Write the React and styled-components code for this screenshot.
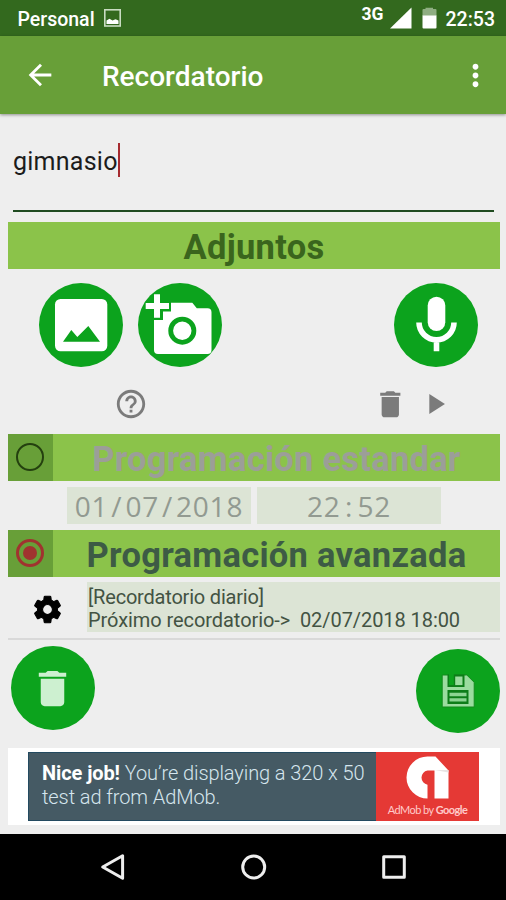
import React from 'react';
import styled, { createGlobalStyle } from 'styled-components';
import {
  MdArrowBack,
  MdDelete,
  MdHelpOutline,
  MdMoreVert,
  MdPlayArrow,
  MdSettings,
} from 'react-icons/md';

export default function App() {
  return (
    <>
      <GlobalStyle />
      <Screen>
        <StatusBar />
        <AppBar>
          <MdArrowBack size={34} />
          <Title>Recordatorio</Title>
          <MdMoreVert size={35} />
        </AppBar>
        <Content>
          <NameField>
            <span>gimnasio</span>
            <Caret />
          </NameField>
          <Attachments />
          <SectionBar>
            <RadioCell>
              <Radio />
            </RadioCell>
            <SectionTitle $color="#9c9e98" $spacing={0.25}>
              Programación estandar
            </SectionTitle>
          </SectionBar>
          <DateRow>
            <DateValue value="01/07/2018" />
            <DateValue value="22:52" />
          </DateRow>
          <SectionBar>
            <RadioCell>
              <Radio $checked />
            </RadioCell>
            <SectionTitle $color="#3d5b45" $spacing={0.28}>
              Programación avanzada
            </SectionTitle>
          </SectionBar>
          <AdvancedRow>
            <GearIcon size={33} />
            <Summary>
              <SummaryLine $spacing={-0.2}>[Recordatorio diario]</SummaryLine>
              <SummaryLine $spacing={-0.07}>
                Próximo recordatorio-&gt;&nbsp; 02/07/2018 18:00
              </SummaryLine>
            </Summary>
          </AdvancedRow>
          <Actions>
            <RoundButton aria-label="Eliminar" $color="#cdf0d0">
              <DeleteIcon size={47} />
            </RoundButton>
            <RoundButton aria-label="Guardar" $drop={3}>
              <SaveIcon />
            </RoundButton>
          </Actions>
          <AdBanner />
        </Content>
        <NavBar />
      </Screen>
    </>
  );
}

function StatusBar() {
  return (
    <Status>
      <StatusText>Personal</StatusText>
      <PictureIcon width="17" height="18" viewBox="0 0 17 18">
        <rect x="0.8" y="0.8" width="15.4" height="16.2" fill="none" stroke="#c9dcc2" strokeWidth="1.6" />
        <path d="M2.5 15v-3.6l3-1.6 3 1.8 3-1.4 3 1.4V15z" fill="#fff" />
      </PictureIcon>
      <Network>3G</Network>
      <svg width="22" height="22" viewBox="0 0 22 22">
        <path d="M21.5 0.5v21H0z" fill="#fff" />
      </svg>
      <Battery width="15" height="22" viewBox="0 0 15 22">
        <path d="M0.5 9V3q0-1 1-1H3.5V0.8h7.5V2h2.5q1 0 1 1v6z" fill="#8fae82" />
        <path d="M0.5 8.5h14V20.5q0 1-1 1h-12q-1 0-1-1z" fill="#fff" />
      </Battery>
      <StatusText>22:53</StatusText>
    </Status>
  );
}

function Attachments() {
  return (
    <>
      <SectionBar>
        <SectionTitle $color="#3a651d" $spacing={0.3}>
          Adjuntos
        </SectionTitle>
      </SectionBar>
      <AttachButtons>
        <RoundButton aria-label="Imagen">
          <PhotoIcon />
        </RoundButton>
        <RoundButton aria-label="Cámara">
          <CameraIcon />
        </RoundButton>
        <Spacer />
        <RoundButton aria-label="Grabar">
          <MicIcon />
        </RoundButton>
      </AttachButtons>
      <AttachTools>
        <MdHelpOutline size={34} />
        <Spacer />
        <MdDelete size={34.6} />
        <MdPlayArrow size={34} />
      </AttachTools>
    </>
  );
}

// Digits are evenly tracked, separators take a full digit cell.
function DateValue({ value }) {
  return (
    <DateBox>
      {value
        .split(/(\D)/)
        .map((part, i) => (i % 2 ? <Separator key={i}>{part}</Separator> : part))}
    </DateBox>
  );
}

function AdBanner() {
  return (
    <AdFrame>
      <AdText>
        <div>
          <strong>Nice job!</strong> You’re displaying a 320 x 50
        </div>
        <div>test ad from AdMob.</div>
      </AdText>
      <AdBrand>
        <svg width="43" height="43" viewBox="0 0 43 43">
          <path
            d="M21.5 42.5A21 21 0 0 1 21.5 0.5H29.5L42.5 14.5V42.5H28.5V14.5H21.5A7.2 7.2 0 0 0 21.5 28.7z"
            fill="#fff"
          />
          <path d="M28.5 14h14v2.6z" fill="#e8e4e4" />
        </svg>
        <AdCaption>
          AdMob by <b>Google</b>
        </AdCaption>
      </AdBrand>
    </AdFrame>
  );
}

function NavBar() {
  return (
    <Nav>
      <svg width="28" height="30" viewBox="0 0 28 30">
        <path d="M3.7 15L23.6 3.8V26.2z" />
      </svg>
      <svg width="28" height="30" viewBox="0 0 28 30">
        <circle cx="13.7" cy="15" r="11" />
      </svg>
      <svg width="28" height="30" viewBox="0 0 28 30">
        <rect x="3.7" y="4.7" width="20.6" height="20.6" />
      </svg>
    </Nav>
  );
}

function PhotoIcon() {
  return (
    <svg width="84" height="84" viewBox="0 0 84 84">
      <rect x="16" y="16" width="52.3" height="52.3" rx="5.5" fill="#fff" />
      <path d="M24 58.7L32.3 47L38.3 54L49.3 43L61 58.7z" fill="#0ca31d" />
    </svg>
  );
}

function CameraIcon() {
  return (
    <svg width="84" height="84" viewBox="0 0 84 84">
      <path d="M16 11.3h6V20h9v6h-9v8.7h-6V26H7.7v-6H16z" fill="#fff" />
      <path
        d="M33 19.7H54.3L58.8 25.3H69.5q4 0 4 4V67q0 4-4 4H20q-4 0-4-4V37H25V28.5H33z"
        fill="#fff"
      />
      <circle cx="44.3" cy="47.7" r="11.6" fill="none" stroke="#0ca31d" strokeWidth="4.8" />
    </svg>
  );
}

function MicIcon() {
  return (
    <svg width="84" height="84" viewBox="0 0 84 84">
      <rect x="33.7" y="13.7" width="17.6" height="34.3" rx="8.8" fill="#fff" />
      <path
        d="M25 39.5a17.5 17.2 0 0 0 35 0M42.5 57v11.3"
        fill="none"
        stroke="#fff"
        strokeWidth="5.6"
      />
    </svg>
  );
}

function SaveIcon() {
  return (
    <svg width="84" height="84" viewBox="0 0 84 84">
      <path d="M26.2 26H50.8L58.2 33.3V58H26.2z" fill="#9bdc9f" stroke="#128a1d" />
      <path d="M31.5 25.5h17v12.5h-17z" fill="#0d7d18" />
      <path d="M33 25h4.8v11H33z" fill="#0ca31d" />
      <path d="M39.2 27.5h7.3v8.6h-7.3z" fill="#9bdc9f" />
      <path d="M31.5 41h21v14h-21z" fill="#0d7d18" />
      <path d="M33.5 43.8h17v3.4h-17zM33.5 49.2h17v3.4h-17z" fill="#8cd492" />
    </svg>
  );
}

const GlobalStyle = createGlobalStyle`
  * {
    box-sizing: border-box;
  }

  body {
    margin: 0;
    background: #eee;
    font-family: Roboto, 'Liberation Sans', sans-serif;
  }

  svg {
    display: block;
    flex: none;
  }
`;

const Screen = styled.div`
  display: flex;
  flex-direction: column;
  width: 506px;
  height: 900px;
  overflow: hidden;
  background: #eee;
  white-space: nowrap;
`;

const Status = styled.div`
  display: flex;
  align-items: center;
  flex: none;
  height: 36px;
  padding: 0 11px 0 17.5px;
  background: #33691e;
  color: #fff;
`;

const StatusText = styled.span`
  padding-top: 2px;
  font-size: 19.5px;
  font-weight: 500;
`;

const PictureIcon = styled.svg`
  margin: 0 auto 0 9px;
`;

const Network = styled.span`
  margin-right: 6px;
  padding-bottom: 9px;
  font-size: 17.5px;
  font-weight: 700;
`;

const Battery = styled.svg`
  margin: 0 9px 0 10px;
`;

const AppBar = styled.header`
  display: flex;
  align-items: center;
  flex: none;
  height: 78px;
  padding: 0 13px 0 23px;
  background: #689f38;
  color: #fff;
  box-shadow: 0 1px 3px rgba(0, 0, 0, 0.4);
`;

const Title = styled.h1`
  flex: 1;
  margin: 0;
  padding: 3px 0 0 45px;
  font-size: 28px;
  font-weight: 500;
`;

const Content = styled.main`
  display: flex;
  flex-direction: column;
  flex: none;
  height: 719.5px;
  padding: 0 6px 0 8px;
`;

const NameField = styled.div`
  display: flex;
  align-items: flex-start;
  height: 98px;
  margin: 0 6px 10px 5px;
  padding-top: 29px;
  border-bottom: 2px solid #1f4a20;
  color: #1c1c1c;
  font-size: 25px;
  letter-spacing: 0.25px;
  line-height: 37px;
`;

const Caret = styled.span`
  width: 2px;
  height: 34px;
  background: #a52a2f;
`;

const SectionBar = styled.div`
  display: flex;
  flex: none;
  height: 47px;
  background: #8bc34a;
`;

const SectionTitle = styled.h2`
  flex: 1;
  margin: 0;
  padding: 2px 0 0;
  color: ${({ $color }) => $color};
  font-size: 34.5px;
  font-weight: 700;
  letter-spacing: ${({ $spacing }) => $spacing}px;
  line-height: 47px;
  text-align: center;
`;

const RadioCell = styled.div`
  display: flex;
  align-items: center;
  width: 45px;
  padding: 0 0 1px 8px;
  background: #689f38;
`;

const Radio = styled.span`
  display: flex;
  align-items: center;
  justify-content: center;
  width: 28px;
  height: 28px;
  border: solid ${({ $checked }) => ($checked ? '#a0332f' : '#24400f')};
  border-width: ${({ $checked }) => ($checked ? 3 : 2)}px;
  border-radius: 50%;

  &::after {
    content: '';
    width: 14px;
    height: 14px;
    border-radius: 50%;
    background: ${({ $checked }) => ($checked ? '#a0332f' : 'transparent')};
  }
`;

const AttachButtons = styled.div`
  display: flex;
  gap: 15px;
  padding: 14px 22px 0 31px;
`;

const RoundButton = styled.button`
  display: flex;
  align-items: center;
  justify-content: center;
  flex: none;
  width: 84px;
  height: 84px;
  margin: ${({ $drop = 0 }) => $drop}px 0 0;
  padding: 0;
  border: 0;
  border-radius: 50%;
  background: #0ca31d;
  color: ${({ $color = '#fff' }) => $color};
`;

const DeleteIcon = styled(MdDelete)`
  margin-right: 2px;
`;

const Spacer = styled.div`
  flex: 1;
`;

const AttachTools = styled.div`
  display: flex;
  align-items: center;
  height: 66px;
  margin-bottom: 1px;
  padding: 8px 48.5px 0 105.5px;
  color: #7b7b7b;

  svg:last-child {
    margin-left: 10px;
  }
`;

const DateRow = styled.div`
  display: flex;
  gap: 6px;
  height: 49px;
  padding: 6px 0 6px 59px;
`;

const DateBox = styled.div`
  width: 184px;
  background: #dce4d5;
  color: #929a91;
  font-family: 'Open Sans', 'Noto Sans', sans-serif;
  font-size: 28px;
  letter-spacing: 0.8px;
  line-height: 39px;
  text-align: center;
`;

const Separator = styled.span`
  display: inline-block;
  width: 17px;
  text-align: center;
`;

const AdvancedRow = styled.div`
  display: flex;
  align-items: flex-start;
  height: 63px;
  padding: 5px 0 0 23px;
  border-bottom: 2px solid #d9d9d9;
  color: #000;
`;

const GearIcon = styled(MdSettings)`
  margin-top: 10.5px;

  path:last-child {
    stroke: #000;
    stroke-width: 0.8px;
  }
`;

const Summary = styled.div`
  flex: 1;
  height: 50px;
  margin-left: 23px;
  padding: 3.5px 0 0 1px;
  background: #dce4d5;
  color: #435343;
  font-size: 20px;
  line-height: 23.5px;
`;

const SummaryLine = styled.div`
  letter-spacing: ${({ $spacing }) => $spacing}px;
`;

const Actions = styled.div`
  display: flex;
  justify-content: space-between;
  height: 108px;
  padding: 6px 0 0 3px;
`;

const AdFrame = styled.div`
  display: flex;
  flex: none;
  height: 77px;
  padding: 4px 21px 4px 20px;
  background: #fff;
`;

const AdText = styled.div`
  flex: 1;
  padding: 8px 0 0 13px;
  border: 1px solid #234a60;
  border-right: 0;
  background: #455a64;
  color: #d6e6ee;
  font-size: 20px;
  font-weight: 300;
  letter-spacing: -0.09px;
  line-height: 24px;

  strong {
    color: #fff;
    font-weight: 700;
  }
`;

const AdBrand = styled.div`
  display: flex;
  flex-direction: column;
  align-items: center;
  width: 103px;
  padding-top: 4px;
  background: #e53935;
`;

const AdCaption = styled.div`
  margin-top: 3px;
  color: #ffc9c9;
  font-family: Lato, sans-serif;
  font-size: 11px;
  letter-spacing: -0.55px;
  line-height: 15px;

  b {
    font-weight: 700;
  }
`;

const Nav = styled.nav`
  display: flex;
  gap: 112.5px;
  flex: none;
  height: 66.5px;
  padding: 18.5px 0 0 99px;
  background: #000;

  svg {
    fill: none;
    stroke: #eee;
    stroke-width: 3;
    stroke-linejoin: round;
  }
`;
